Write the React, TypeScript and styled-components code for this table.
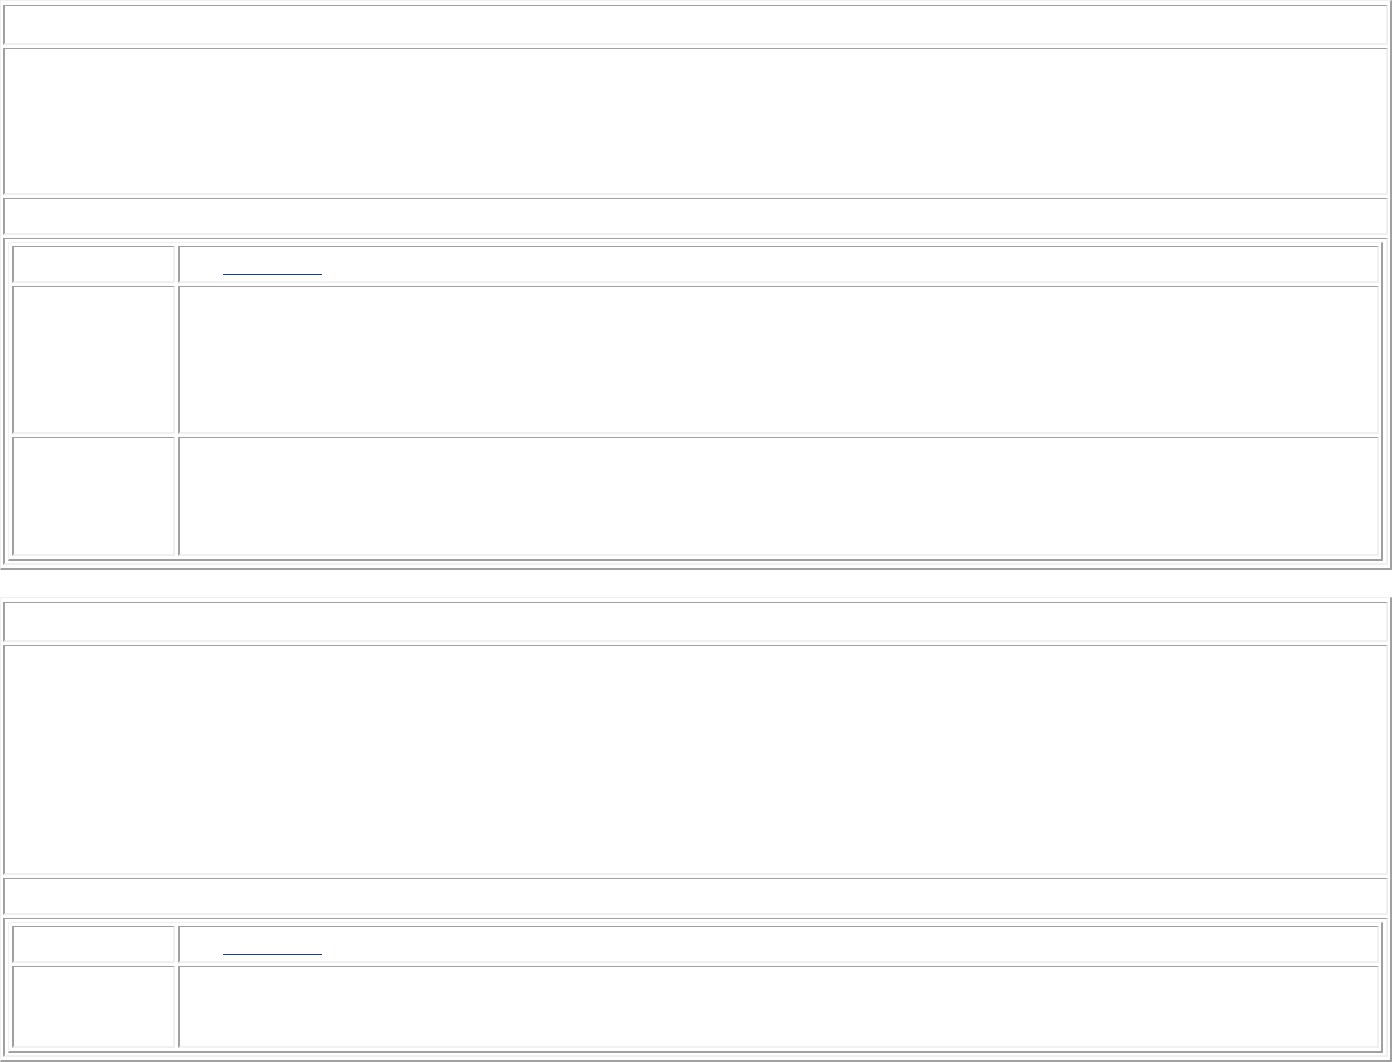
import styled, { createGlobalStyle } from 'styled-components'

interface Section {
  id: number;
  header: number;
  body: number;
  footer: number;
  rows: number[];
}

// heights of each row, measured from the page
const sections: Section[] = [
  { id: 1, header: 40, body: 147, footer: 37, rows: [37, 148, 119] },
  { id: 2, header: 40, body: 230, footer: 37, rows: [37, 82] },
];

const GlobalStyle = createGlobalStyle`
  html, body {
    margin: 0;
    padding: 0;
    background: #ffffff;
    overflow: hidden;
  }
  body {
    font-family: "Liberation Serif", "Times New Roman", serif;
    font-size: 16px;
    color: #000000;
  }
  * {
    box-sizing: border-box;
  }
`

const Page = styled.main`
  display: flex;
  flex-direction: column;
  gap: 27px;
  width: 1392px;
`

const Table = styled.section<{ $nested?: boolean }>`
  display: flex;
  flex-direction: column;
  gap: 3px;
  border-style: solid;
  border-width: 1px 2px 2px 1px;
  border-color: #f0f0f0 #a0a0a0 #a0a0a0 #f0f0f0;
  padding: ${p => (p.$nested ? '3px 2px 3px 3px' : '4px 2px 3px 2px')};
`

const Row = styled.div`
  display: flex;
  gap: 3px;
`

const Cell = styled.div<{ $h?: number; $label?: boolean }>`
  height: ${p => (p.$h ? `${p.$h}px` : 'auto')};
  flex: ${p => (p.$label ? '0 0 163px' : '1 1 auto')};
  border-style: solid;
  border-width: 1px 2px 2px 2px;
  border-color: #a0a0a0 #f0f0f0 #f0f0f0 #a0a0a0;
`

const Holder = styled.div`
  border-style: solid;
  border-width: 1px 2px 2px 2px;
  border-color: #a0a0a0 #f0f0f0 #f0f0f0 #a0a0a0;
  padding: 3px 3px 2px 3px;
`

const Link = styled.a`
  display: block;
  width: 99px;
  height: 28px;
  margin-left: 43px;
  border-bottom: 1px solid #1a3c9e;
  text-decoration: none;
`

const Block = ({ section }: { section: Section }) => (
  <Table>
    <Cell $h={section.header} />
    <Cell $h={section.body} />
    <Cell $h={section.footer} />
    <Holder>
      <Table $nested>
        {section.rows.map((h, i) => (
          <Row key={i}>
            <Cell $h={h} $label />
            <Cell $h={h}>
              {i === 0 && <Link href="#" aria-label="link" />}
            </Cell>
          </Row>
        ))}
      </Table>
    </Holder>
  </Table>
)

const App = () => (
  <>
    <GlobalStyle />
    <Page>
      {sections.map(s => (
        <Block key={s.id} section={s} />
      ))}
    </Page>
  </>
)

export default App
